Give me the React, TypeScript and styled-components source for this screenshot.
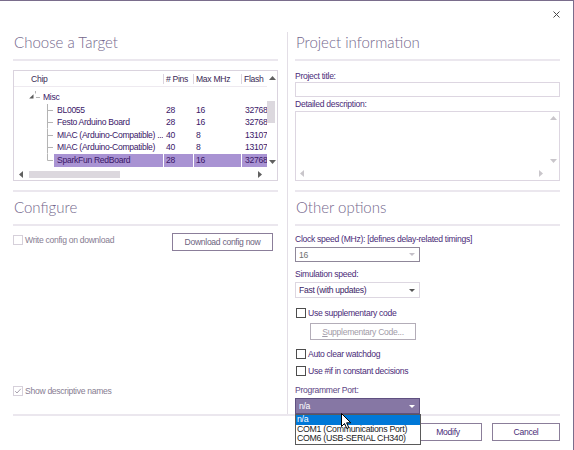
import React from "react";
import styled, {createGlobalStyle} from "styled-components";

const UI = `"Liberation Sans", Arial, sans-serif`;
const HEAD = `Lato, "Open Sans", "Liberation Sans", sans-serif`;

const GlobalStyle = createGlobalStyle`
  html, body {
    margin: 0;
    padding: 0;
    background: #fff;
  }
  body {
    font-family: ${UI};
    font-size: 8.6px;
    letter-spacing: -0.3px;
    line-height: 12px;
    color: #3d1f66;
  }
  * {
    box-sizing: border-box;
  }
`;

const Window = styled.div`
  position: relative;
  width: 574px;
  height: 450px;
  border-top: 1px solid #7a6d8c;
  border-right: 1px solid #7a6d8c;
  background: #fff;
  overflow: hidden;
  display: flex;
  flex-direction: column;
`;

const TitleBar = styled.div`
  height: 30px;
  display: flex;
  justify-content: flex-end;
  align-items: flex-start;
  padding: 10px 13px 0 0;
`;

const Body = styled.div`
  height: 383px;
  display: flex;
  padding: 0 13px;
`;

const Column = styled.div`
  width: 265px;
  display: flex;
  flex-direction: column;
`;

const Divider = styled.div`
  width: 1px;
  margin: 1px 7px 0 9px;
  background: #e3dee6;
`;

const Section = styled.section<{ $first?: boolean }>`
  display: flex;
  flex-direction: column;
  ${p => p.$first ? "" : `
    margin-top: 9px;
    border-top: 2px solid #ebe7ee;
    padding-top: 4px;
  `}
`;

const Heading = styled.h2`
  margin: 0;
  font-family: ${HEAD};
  font-weight: 300;
  font-size: 15px;
  letter-spacing: 0;
  line-height: 22px;
  color: #74678c;
  padding: 0 0 6px 1px;
  border-bottom: 2px solid #ebe7ee;
`;

/* ---------- tree list ---------- */

const ListBox = styled.div`
  margin-top: 9px;
  height: 111px;
  border: 1px solid #dad3de;
  display: grid;
  grid-template-columns: 253px 10px;
  grid-template-rows: 98px 11px;
`;

const ListContent = styled.div`
  overflow: hidden;
`;

const HeaderRow = styled.div`
  height: 16px;
  display: grid;
  grid-template-columns: 149px 30px 48px 26px;
  border-bottom: 1px solid #eeeaf0;
  white-space: nowrap;
`;

const HeaderCell = styled.div<{ $first?: boolean }>`
  margin-top: 3px;
  height: 10px;
  line-height: 10px;
  overflow: hidden;
  color: #3a2a55;
  padding-left: ${p => p.$first ? "17px" : "2px"};
  border-left: ${p => p.$first ? "none" : "1px solid #dcd5df"};
`;

const Rows = styled.div`
  padding-top: 4px;
`;

const Row = styled.div`
  height: 12.6px;
  display: grid;
  grid-template-columns: 149px 30px 48px 26px;
  line-height: 12.6px;
  white-space: nowrap;
  color: #3a1767;
`;

const NameCell = styled.div`
  display: flex;
  overflow: hidden;
`;

const Name = styled.span<{ $selected?: boolean; $pad: number }>`
  flex: 1;
  overflow: hidden;
  padding-left: ${p => p.$pad}px;
  background: ${p => p.$selected ? "#a993d3" : "transparent"};
`;

const Cell = styled.div<{ $selected?: boolean; $pad?: number }>`
  overflow: hidden;
  padding-left: ${p => p.$pad ?? 2}px;
  border-left: 1px solid #fff;
  background: ${p => p.$selected ? "#a993d3" : "transparent"};
`;

const VScroll = styled.div`
  display: flex;
  flex-direction: column;
  align-items: center;
`;

const ScrollBtn = styled.div<{ $size: number; $w?: number }>`
  width: ${p => p.$w ? `${p.$w}px` : "100%"};
  height: ${p => p.$size}px;
  display: flex;
  align-items: center;
  justify-content: center;
  flex: none;
`;

const VTrack = styled.div`
  flex: 1;
  width: 100%;
  padding-top: 16px;
`;

const VThumb = styled.div`
  width: 8px;
  height: 22px;
  background: #dcd8de;
`;

const HScroll = styled.div`
  display: flex;
  align-items: center;
`;

const HTrack = styled.div`
  flex: 1;
  height: 100%;
  display: flex;
  align-items: center;
`;

const HThumb = styled.div`
  width: 91px;
  height: 7px;
  margin-left: 1px;
  background: #dcd8de;
`;

/* ---------- fields ---------- */

const Label = styled.div<{ $mt: number; $soft?: boolean }>`
  margin-top: ${p => p.$mt}px;
  height: 12px;
  color: ${p => p.$soft ? "#5d4785" : "#4a2b78"};
  white-space: nowrap;
`;

const TextInput = styled.div`
  height: 15px;
  border: 1px solid #ddd6e1;
`;

const TextArea = styled.div`
  margin-top: 1px;
  height: 70px;
  border: 1px solid #ddd6e1;
  display: grid;
  grid-template-columns: 1fr 12px;
  grid-template-rows: 55px 13px;
`;

const AreaV = styled.div`
  display: flex;
  flex-direction: column;
  justify-content: space-between;
`;

const AreaH = styled.div`
  display: flex;
  justify-content: space-between;
`;

const Combo = styled.div<{ $mt: number; $h: number; $tone: "disabled" | "normal" | "active" }>`
  margin-top: ${p => p.$mt}px;
  width: 125px;
  height: ${p => p.$h}px;
  display: flex;
  align-items: center;
  justify-content: space-between;
  padding: 0 4px 0 3px;
  white-space: nowrap;
  border: 1px solid ${p => p.$tone === "disabled" ? "#8f8799" : p.$tone === "active" ? "#5f5080" : "#ddd7e1"};
  background: ${p => p.$tone === "active" ? "#8677a4" : "#fff"};
  color: ${p => p.$tone === "disabled" ? "#707070" : p.$tone === "active" ? "#fff" : "#3b1d66"};
`;

const CheckRow = styled.label<{ $mt: number; $disabled?: boolean }>`
  margin-top: ${p => p.$mt}px;
  height: 12px;
  display: flex;
  align-items: center;
  gap: 2px;
  padding-left: 1px;
  white-space: nowrap;
  color: ${p => p.$disabled ? "#877d92" : "#4a2b78"};
`;

const Box = styled.span<{ $disabled?: boolean }>`
  width: 10px;
  height: 10px;
  flex: none;
  display: flex;
  align-items: center;
  justify-content: center;
  background: #fff;
  border: 1px solid ${p => p.$disabled ? "#d6d0da" : "#4d4d4d"};
`;

const ConfigRow = styled.div`
  margin-top: 7px;
  display: flex;
  justify-content: space-between;
  align-items: flex-start;
  padding-right: 5px;
  > label {
    margin-top: 1px;
    padding-left: 0;
  }
`;

const Button = styled.button<{ $w: number; $h: number; $disabled?: boolean }>`
  width: ${p => p.$w}px;
  height: ${p => p.$h}px;
  padding: 0;
  margin: 0;
  background: #fff;
  font-family: ${UI};
  font-size: 8.6px;
  letter-spacing: -0.3px;
  border: 1px solid ${p => p.$disabled ? "#b3adb8" : "#8b7e9a"};
  color: ${p => p.$disabled ? "#a29ca8" : "#4a2e78"};
`;

const DownloadButton = styled(Button)`
  color: #6d6480;
`;

const SuppButton = styled(Button)`
  margin: 4px 0 0 15px;
`;

const BottomCheck = styled(CheckRow)`
  margin-top: auto;
  margin-bottom: 17px;
  padding-left: 0;
`;

/* ---------- footer ---------- */

const Footer = styled.div`
  flex: 1;
  margin: 0 13px;
  border-top: 2px solid #ebe7ee;
  padding-top: 7px;
  display: flex;
  justify-content: flex-end;
  align-items: flex-start;
  gap: 10px;
`;

/* ---------- overlays ---------- */

const Popup = styled.div`
  position: absolute;
  left: 295px;
  top: 413px;
  width: 126px;
  height: 31px;
  background: #fff;
  border: 1px solid #5a5a5a;
  display: flex;
  flex-direction: column;
  white-space: nowrap;
  font-size: 8.8px;
`;

const PopupItem = styled.div<{ $active?: boolean }>`
  height: 9.6px;
  line-height: 9.6px;
  padding-left: 1px;
  background: ${p => p.$active ? "#0078d7" : "transparent"};
  color: ${p => p.$active ? "#fff" : "#1c1c1c"};
`;

const Cursor = styled.svg`
  position: absolute;
  left: 341px;
  top: 412px;
`;

type Dir = "up" | "down" | "left" | "right";

function Tri({dir, color}: { dir: Dir; color: string }) {
    const pts = {
        up: "0,4 7,4 3.5,0",
        down: "0,0 7,0 3.5,4",
        left: "4,0 4,7 0,3.5",
        right: "0,0 0,7 4,3.5",
    }[dir];
    const vertical = dir === "up" || dir === "down";
    return (
        <svg width={vertical ? 7 : 4} height={vertical ? 4 : 7} viewBox={vertical ? "0 0 7 4" : "0 0 4 7"}>
            <polygon points={pts} fill={color}/>
        </svg>
    );
}

function ComboArrow({color}: { color: string }) {
    return (
        <svg width="6" height="3" viewBox="0 0 6 3">
            <polygon points="0,0 6,0 3,3" fill={color}/>
        </svg>
    );
}

function TreeGuide({group, last}: { group?: boolean; last?: boolean }) {
    if (group) {
        return (
            <svg width="26" height="12.6" viewBox="0 0 26 12.6" style={{flex: "none"}}>
                <line x1="21.5" y1="0" x2="21.5" y2="2.5" stroke="#b4b4b4"/>
                <polygon points="19.5,3.2 19.5,7.5 15.2,7.5" fill="#5a5a5a"/>
                <line x1="22" y1="6.5" x2="26" y2="6.5" stroke="#b4b4b4"/>
            </svg>
        );
    }
    return (
        <svg width="40" height="12.6" viewBox="0 0 40 12.6" style={{flex: "none"}}>
            <line x1="33.5" y1="0" x2="33.5" y2={last ? 6.5 : 12.6} stroke="#b4b4b4"/>
            <line x1="33.5" y1="6.5" x2="39" y2="6.5" stroke="#b4b4b4"/>
        </svg>
    );
}

type Chip = { name: string; pins: string; mhz: string; flash: string; selected?: boolean };

const chips: Chip[] = [
    {name: "BL0055", pins: "28", mhz: "16", flash: "32768"},
    {name: "Festo Arduino Board", pins: "28", mhz: "16", flash: "32768"},
    {name: "MIAC (Arduino-Compatible) ...", pins: "40", mhz: "8", flash: "131072"},
    {name: "MIAC (Arduino-Compatible)", pins: "40", mhz: "8", flash: "131072"},
    {name: "SparkFun RedBoard", pins: "28", mhz: "16", flash: "32768", selected: true},
];

function Check({checked, disabled}: { checked?: boolean; disabled?: boolean }) {
    return (
        <Box $disabled={disabled}>
            {checked && (
                <svg width="8" height="8" viewBox="0 0 8 8">
                    <polyline points="1.2,4.2 3,6 6.8,1.8" fill="none" stroke="#a7a0ad" strokeWidth="1"/>
                </svg>
            )}
        </Box>
    );
}

function TargetList() {
    return (
        <ListBox>
            <ListContent>
                <HeaderRow>
                    <HeaderCell $first>Chip</HeaderCell>
                    <HeaderCell># Pins</HeaderCell>
                    <HeaderCell>Max MHz</HeaderCell>
                    <HeaderCell>Flash</HeaderCell>
                </HeaderRow>
                <Rows>
                    <Row>
                        <NameCell>
                            <TreeGuide group/>
                            <Name $pad={3}>Misc</Name>
                        </NameCell>
                    </Row>
                    {chips.map((c, i) => (
                        <Row key={c.name + i}>
                            <NameCell>
                                <TreeGuide last={i === chips.length - 1}/>
                                <Name $pad={3} $selected={c.selected}>{c.name}</Name>
                            </NameCell>
                            <Cell $selected={c.selected}>{c.pins}</Cell>
                            <Cell $selected={c.selected}>{c.mhz}</Cell>
                            <Cell $selected={c.selected} $pad={3}>{c.flash}</Cell>
                        </Row>
                    ))}
                </Rows>
            </ListContent>
            <VScroll>
                <ScrollBtn $size={14}><Tri dir="up" color="#606060"/></ScrollBtn>
                <VTrack><VThumb/></VTrack>
                <ScrollBtn $size={14}><Tri dir="down" color="#606060"/></ScrollBtn>
            </VScroll>
            <HScroll>
                <ScrollBtn $size={14} $w={14}><Tri dir="left" color="#606060"/></ScrollBtn>
                <HTrack><HThumb/></HTrack>
                <ScrollBtn $size={14} $w={14}><Tri dir="right" color="#606060"/></ScrollBtn>
            </HScroll>
            <div/>
        </ListBox>
    );
}

export default function App() {
    return (
        <>
            <GlobalStyle/>
            <Window>
                <TitleBar>
                    <svg width="7" height="7" viewBox="0 0 7 7">
                        <line x1="0.5" y1="0.5" x2="6.5" y2="6.5" stroke="#4a4a4a"/>
                        <line x1="6.5" y1="0.5" x2="0.5" y2="6.5" stroke="#4a4a4a"/>
                    </svg>
                </TitleBar>
                <Body>
                    <Column>
                        <Section $first>
                            <Heading>Choose a Target</Heading>
                            <TargetList/>
                        </Section>
                        <Section>
                            <Heading>Configure</Heading>
                            <ConfigRow>
                                <CheckRow $mt={0} $disabled>
                                    <Check disabled/>
                                    Write config on download
                                </CheckRow>
                                <DownloadButton $w={101} $h={18}>Download config now</DownloadButton>
                            </ConfigRow>
                        </Section>
                        <BottomCheck $mt={0} $disabled>
                            <Check checked disabled/>
                            Show descriptive names
                        </BottomCheck>
                    </Column>
                    <Divider/>
                    <Column>
                        <Section $first>
                            <Heading>Project information</Heading>
                            <Label $mt={9}>Project title:</Label>
                            <TextInput/>
                            <Label $mt={1}>Detailed description:</Label>
                            <TextArea>
                                <div/>
                                <AreaV>
                                    <ScrollBtn $size={12}><Tri dir="up" color="#c9c6cb"/></ScrollBtn>
                                    <ScrollBtn $size={12}><Tri dir="down" color="#c9c6cb"/></ScrollBtn>
                                </AreaV>
                                <AreaH>
                                    <ScrollBtn $size={12} $w={12}><Tri dir="left" color="#c9c6cb"/></ScrollBtn>
                                    <ScrollBtn $size={12} $w={12}><Tri dir="right" color="#c9c6cb"/></ScrollBtn>
                                </AreaH>
                                <div/>
                            </TextArea>
                        </Section>
                        <Section>
                            <Heading>Other options</Heading>
                            <Label $mt={7}>Clock speed (MHz): [defines delay-related timings]</Label>
                            <Combo $mt={2} $h={15} $tone="disabled">
                                16
                                <ComboArrow color="#c4c0c8"/>
                            </Combo>
                            <Label $mt={6}>Simulation speed:</Label>
                            <Combo $mt={2} $h={16} $tone="normal">
                                Fast (with updates)
                                <ComboArrow color="#555"/>
                            </Combo>
                            <CheckRow $mt={9}>
                                <Check/>
                                Use supplementary code
                            </CheckRow>
                            <SuppButton $w={106} $h={17} $disabled>
                                <u>S</u>upplementary Code...
                            </SuppButton>
                            <CheckRow $mt={8}>
                                <Check/>
                                Auto clear watchdog
                            </CheckRow>
                            <CheckRow $mt={5}>
                                <Check/>
                                Use #if in constant decisions
                            </CheckRow>
                            <Label $mt={7} $soft>Programmer Port:</Label>
                            <Combo $mt={2} $h={16} $tone="active">
                                n/a
                                <ComboArrow color="#fff"/>
                            </Combo>
                        </Section>
                    </Column>
                </Body>
                <Footer>
                    <Button $w={68} $h={18}>Modify</Button>
                    <Button $w={68} $h={18}>Cancel</Button>
                </Footer>
                <Popup>
                    <PopupItem $active>n/a</PopupItem>
                    <PopupItem>COM1 (Communications Port)</PopupItem>
                    <PopupItem>COM6 (USB-SERIAL CH340)</PopupItem>
                </Popup>
                <Cursor width="11" height="17" viewBox="0 0 11 17">
                    <path d="M0.5 0.5 L0.5 13.5 L3.5 10.5 L5.8 15.5 L7.8 14.6 L5.6 9.8 L9.8 9.8 Z"
                          fill="#fff" stroke="#000" strokeWidth="1" strokeLinejoin="round"/>
                </Cursor>
            </Window>
        </>
    );
}
